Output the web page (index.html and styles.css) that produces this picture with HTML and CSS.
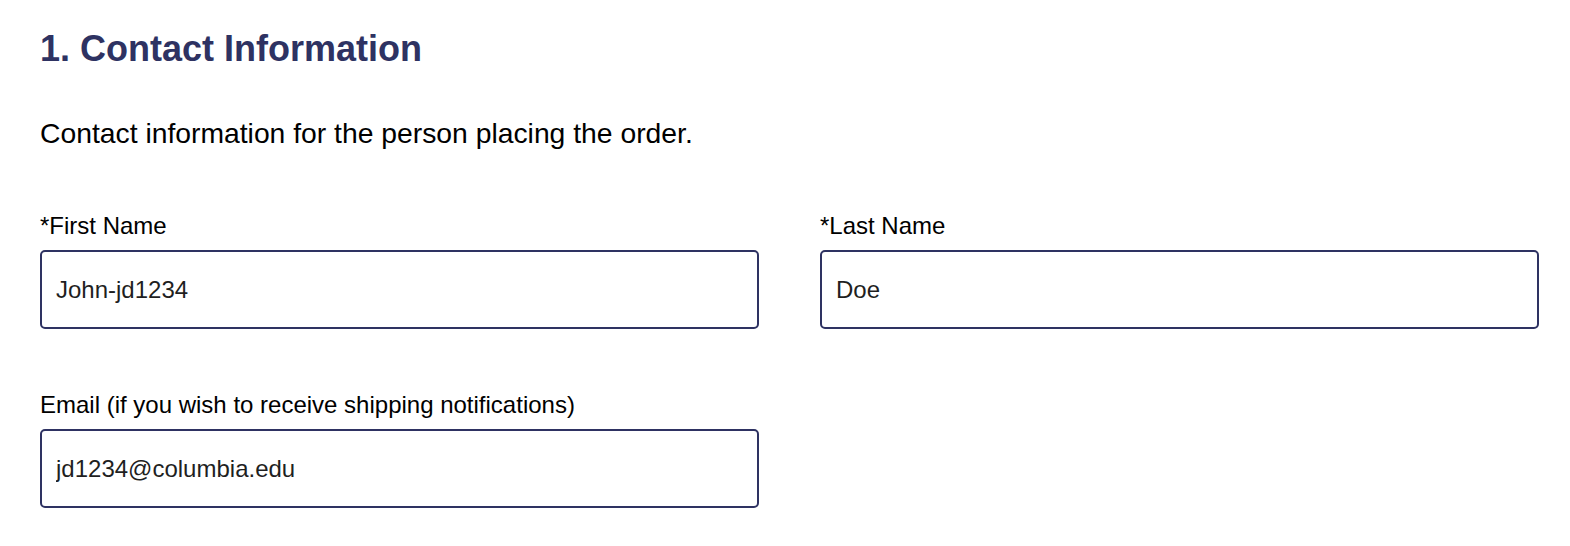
FILE: index.html
```html
<!DOCTYPE html>
<html lang="en">
<head>
<meta charset="utf-8">
<title>Contact Information</title>
<link rel="stylesheet" href="styles.css">
</head>
<body>
<section class="section">
  <h2 class="section-title">1. Contact Information</h2>
  <p class="section-desc">Contact information for the person placing the order.</p>
  <div class="form-grid">
    <div class="field">
      <label class="field-label" for="first">*First Name</label>
      <input class="field-input" id="first" type="text" value="John-jd1234">
    </div>
    <div class="field">
      <label class="field-label" for="last">*Last Name</label>
      <input class="field-input" id="last" type="text" value="Doe">
    </div>
    <div class="field">
      <label class="field-label" for="email">Email (if you wish to receive shipping notifications)</label>
      <input class="field-input" id="email" type="text" value="jd1234@columbia.edu">
    </div>
  </div>
</section>
</body>
</html>
```

FILE: styles.css
```css
html, body {
  margin: 0;
  padding: 0;
  background: #ffffff;
}

body {
  font-family: "Liberation Sans", Arial, Helvetica, sans-serif;
  color: #000000;
}

.section {
  padding: 27px 31px 0 40px;
}

.section-title {
  margin: 0;
  font-size: 36px;
  line-height: 44px;
  font-weight: 700;
  color: #2e3262;
}

.section-desc {
  margin: 46px 0 0 0;
  font-size: 28.3px;
  line-height: 32px;
}

.form-grid {
  display: grid;
  grid-template-columns: 1fr 1fr;
  column-gap: 61px;
  row-gap: 62px;
  margin-top: 63px;
}

.field {
  display: flex;
  flex-direction: column;
}

.field-label {
  font-size: 24px;
  line-height: 28px;
  margin-bottom: 10px;
}

.field-input {
  box-sizing: border-box;
  height: 79px;
  width: 100%;
  border: 2px solid #2e3262;
  border-radius: 5px;
  padding: 0 14px;
  font-family: "Liberation Sans", Arial, Helvetica, sans-serif;
  font-size: 24px;
  color: #1f1f1f;
  background: #ffffff;
  outline: none;
}
```
